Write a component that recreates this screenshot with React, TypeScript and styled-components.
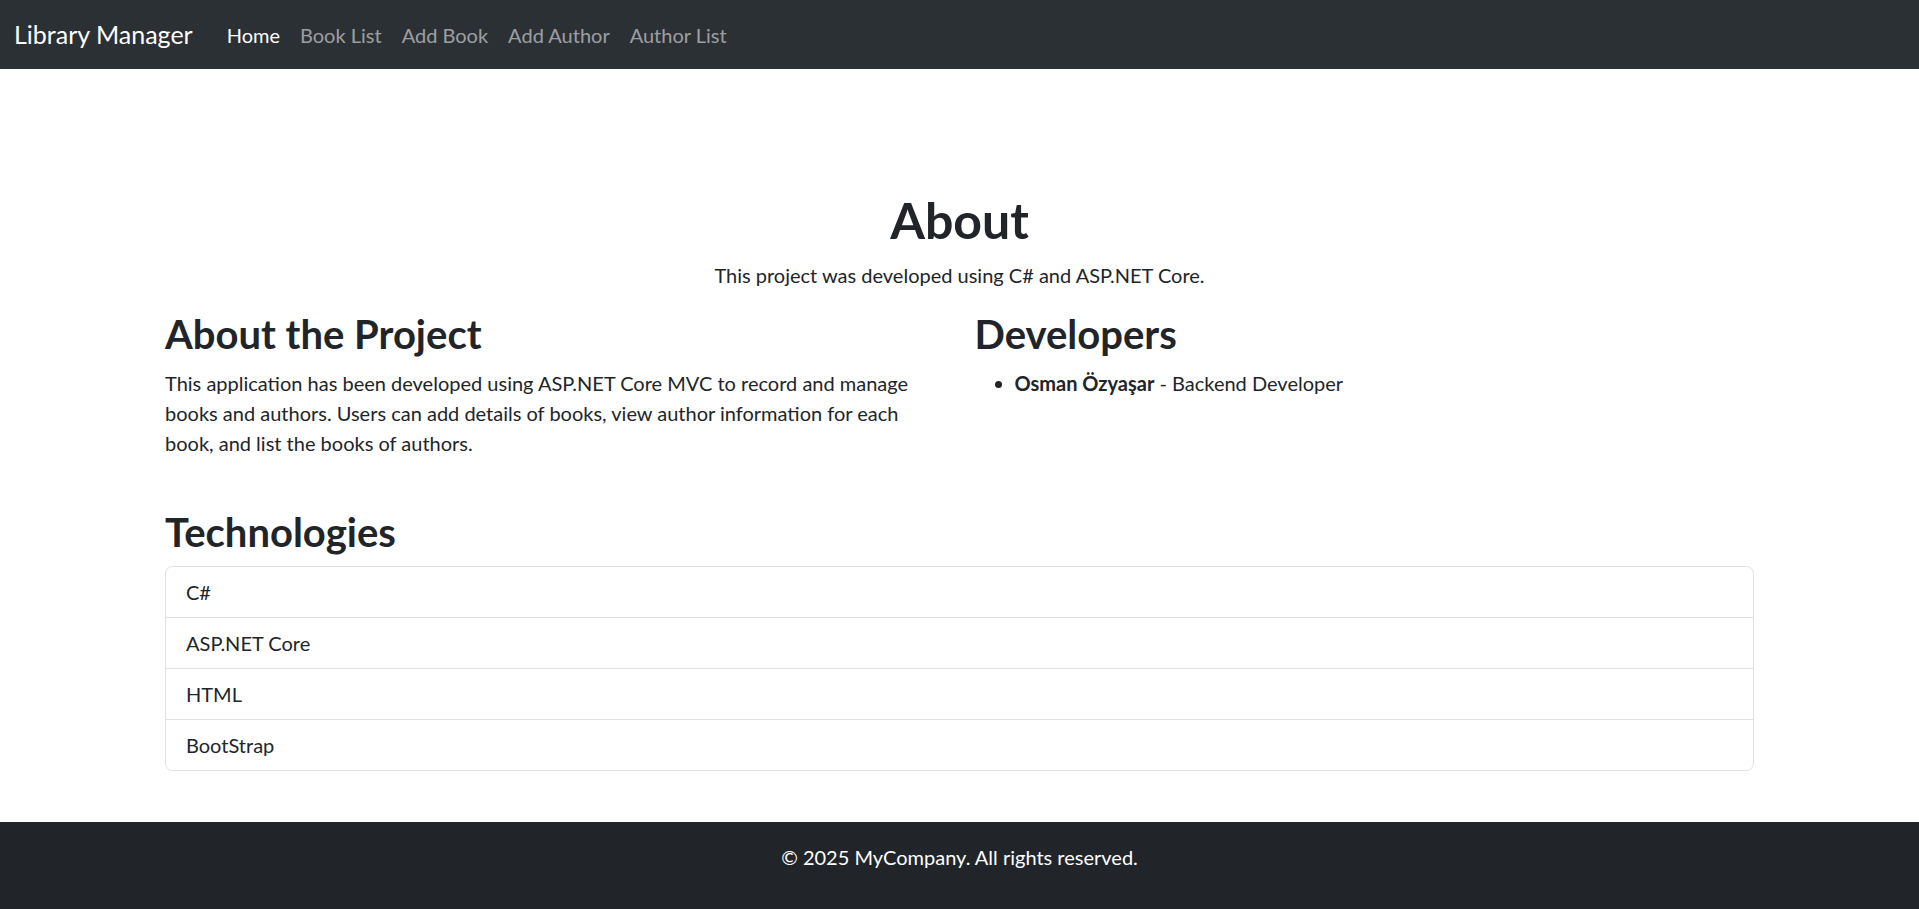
import React from 'react'
import styled, { createGlobalStyle } from 'styled-components'

const GlobalStyle = createGlobalStyle`
    *, *::before, *::after {
        box-sizing: border-box;
    }

    body {
        margin: 0;
        font-family: Lato, "Liberation Sans", sans-serif;
        font-size: 20px;
        line-height: 1.5;
        color: #212529;
        background: #fff;
    }
`

const Navbar = styled.nav`
    display: flex;
    align-items: center;
    height: 69px;
    padding: 0 14px;
    background-color: #2b3035;
`

const Brand = styled.a`
    font-size: 25px;
    line-height: 1.5;
    color: #fff;
    text-decoration: none;
    margin-right: 24px;
`

const NavList = styled.ul`
    display: flex;
    list-style: none;
    margin: 0;
    padding: 0;
`

const NavLink = styled.a<{ $active?: boolean }>`
    display: block;
    padding: 10px;
    font-size: 20px;
    color: ${({ $active }) => ($active ? '#fff' : 'rgba(255, 255, 255, 0.55)')};
    text-decoration: none;
`

const Main = styled.main`
    max-width: 1619px;
    margin: 0 auto;
    padding: 121px 15px 0;
`

const Title = styled.h1`
    margin: 0 0 10px;
    font-size: 50px;
    font-weight: 700;
    line-height: 1.2;
    text-align: center;
`

const Lead = styled.p`
    margin: 0 0 20px;
    text-align: center;
`

const Row = styled.div`
    display: grid;
    grid-template-columns: 1fr 1fr;
    column-gap: 30px;
`

const SectionTitle = styled.h2<{ $spaced?: boolean }>`
    margin: ${({ $spaced }) => ($spaced ? '30px' : '0')} 0 10px;
    font-size: 40px;
    font-weight: 700;
    line-height: 1.2;
`

const Text = styled.p`
    margin: 0 0 20px;
`

const DevList = styled.ul`
    margin: 0 0 20px;
    padding-left: 40px;
`

const ListGroup = styled.ul`
    list-style: none;
    margin: 0;
    padding: 0;
    border: 1px solid #dee2e6;
    border-radius: 7.5px;
    overflow: hidden;
`

const ListItem = styled.li`
    padding: 10px 20px;
    border-bottom: 1px solid #dee2e6;

    &:last-child {
        border-bottom: none;
    }
`

const Footer = styled.footer`
    margin-top: 51px;
    padding: 20px 20px;
    background-color: #212529;
    color: #fff;
    text-align: center;
`

const FooterText = styled.p`
    margin: 0 0 20px;
`

const links = ['Home', 'Book List', 'Add Book', 'Add Author', 'Author List']
const technologies = ['C#', 'ASP.NET Core', 'HTML', 'BootStrap']

const App: React.FC = () => {
  return (
    <>
      <GlobalStyle />
      <Navbar>
        <Brand href="#">Library Manager</Brand>
        <NavList>
          {links.map((link, index) => (
            <li key={link}>
              <NavLink href="#" $active={index === 0}>
                {link}
              </NavLink>
            </li>
          ))}
        </NavList>
      </Navbar>
      <Main>
        <Title>About</Title>
        <Lead>This project was developed using C# and ASP.NET Core.</Lead>
        <Row>
          <div>
            <SectionTitle>About the Project</SectionTitle>
            <Text>
              This application has been developed using ASP.NET Core MVC to record and manage books
              and authors. Users can add details of books, view author information for each book, and
              list the books of authors.
            </Text>
          </div>
          <div>
            <SectionTitle>Developers</SectionTitle>
            <DevList>
              <li>
                <strong>Osman Özyaşar</strong> - Backend Developer
              </li>
            </DevList>
          </div>
        </Row>
        <SectionTitle $spaced>Technologies</SectionTitle>
        <ListGroup>
          {technologies.map((tech) => (
            <ListItem key={tech}>{tech}</ListItem>
          ))}
        </ListGroup>
      </Main>
      <Footer>
        <FooterText>© 2025 MyCompany. All rights reserved.</FooterText>
      </Footer>
    </>
  )
}

export default App
